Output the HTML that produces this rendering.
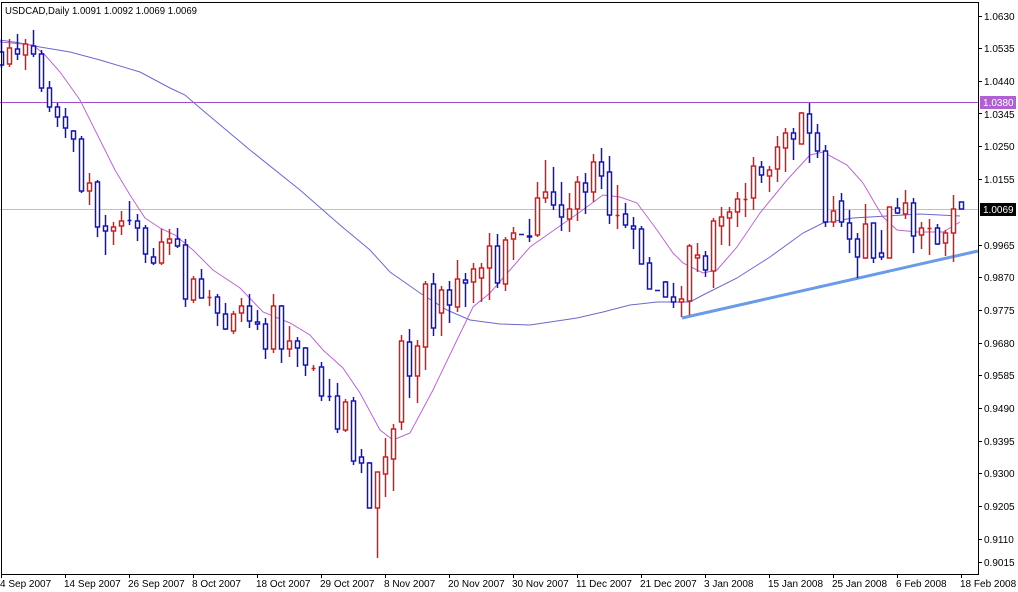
<!DOCTYPE html>
<html><head><meta charset="utf-8"><style>
html,body{margin:0;padding:0;background:#fff;}
svg{display:block;font-family:"Liberation Sans",sans-serif;font-size:10px;}
.b{stroke:#1414b4;fill:#fff;stroke-width:1.5}
.r{stroke:#cc2020;fill:#fff;stroke-width:1.5}
</style></head><body>
<svg width="1018" height="592" viewBox="0 0 1018 592" xmlns="http://www.w3.org/2000/svg">
<rect width="1018" height="592" fill="#fff"/>
<g shape-rendering="crispEdges">
<line x1="0" y1="102.5" x2="978" y2="102.5" stroke="#a050d0"/>
<line x1="0" y1="209.5" x2="978" y2="209.5" stroke="#c0c0c0"/>
</g>
<g fill="none">
<polyline stroke="#6a6ac8" stroke-width="1" points="0,40 20,43 40,47 70,52 100,60 140,72 170,88 185,95 200,108 250,150 300,190 340,225 370,250 390,272 420,293 447,310 470,320 500,324 530,325 577,318 603,312 630,305 657,302 670,302 690,302 703,295 737,278 770,257 803,233 823,223 853,218 887,216 920,214 960,216"/>
<polyline stroke="#b868cc" stroke-width="1" points="0,42 33,45 45,55 60,72 80,100 100,140 115,170 130,195 145,218 160,228 175,235 193,250 213,270 240,288 263,312 290,323 310,335 323,350 343,368 360,393 380,430 393,440 410,433 433,390 457,340 473,307 490,293 510,270 530,247 557,228 580,212 603,195 620,197 637,203 657,230 673,253 683,263 703,273 717,270 737,247 760,213 787,180 810,155 823,152 847,165 863,183 883,217 897,230 917,232 943,232 960,222"/>
<line x1="682" y1="318" x2="978" y2="251" stroke="#6a9ae8" stroke-width="3"/>
</g>
<g>
<path class="b" d="M1.5 40V52M1.5 65V68M-1.5 52H3.5V65H-1.5Z"/>
<path class="r" d="M9.5 39V48M9.5 64V67M7.5 48H11.5V64H7.5Z"/>
<path class="b" d="M17.5 34V49M17.5 54V60M15.5 49H19.5V54H15.5Z"/>
<path class="r" d="M25.5 39V44M25.5 55V70M23.5 44H27.5V55H23.5Z"/>
<path class="b" d="M33.5 30V46M33.5 54V57M31.5 46H35.5V54H31.5Z"/>
<path class="b" d="M41.5 50V54M41.5 88V92M39.5 54H43.5V88H39.5Z"/>
<path class="b" d="M49.5 81V88M49.5 107V112M47.5 88H51.5V107H47.5Z"/>
<path class="b" d="M57.5 103V107M57.5 117V127M55.5 107H59.5V117H55.5Z"/>
<path class="b" d="M65.5 108V117M65.5 128V138M63.5 117H67.5V128H63.5Z"/>
<path class="b" d="M73.5 130V131M73.5 139V152M71.5 131H75.5V139H71.5Z"/>
<path class="b" d="M81.5 136V139M81.5 191V193M79.5 139H83.5V191H79.5Z"/>
<path class="r" d="M89.5 173V183M89.5 191V205M87.5 183H91.5V191H87.5Z"/>
<path class="b" d="M97.5 180V182M97.5 227V237M95.5 182H99.5V227H95.5Z"/>
<path class="b" d="M105.5 215V226M105.5 231V255M103.5 226H107.5V231H103.5Z"/>
<path class="r" d="M113.5 222V227M113.5 231V245M111.5 227H115.5V231H111.5Z"/>
<path class="r" d="M121.5 211V221M121.5 226V235M119.5 221H123.5V226H119.5Z"/>
<path class="b" d="M129.5 201V225M127.5 220.5H131.5"/>
<path class="b" d="M137.5 214V221M137.5 228V241M135.5 221H139.5V228H135.5Z"/>
<path class="b" d="M145.5 225V228M145.5 254V263M143.5 228H147.5V254H143.5Z"/>
<path class="b" d="M153.5 248V257M153.5 263V265M151.5 257H155.5V263H151.5Z"/>
<path class="r" d="M161.5 229V242M161.5 263V265M159.5 242H163.5V263H159.5Z"/>
<path class="r" d="M169.5 229V239M169.5 243V255M167.5 239H171.5V243H167.5Z"/>
<path class="b" d="M177.5 228V239M177.5 246V248M175.5 239H179.5V246H175.5Z"/>
<path class="b" d="M185.5 239V245M185.5 299V307M183.5 245H187.5V299H183.5Z"/>
<path class="r" d="M193.5 276V279M193.5 300V303M191.5 279H195.5V300H191.5Z"/>
<path class="b" d="M201.5 269V279M199.5 279H203.5V298H199.5Z"/>
<path class="r" d="M209.5 290V306M207.5 297.5H211.5"/>
<path class="b" d="M217.5 294V297M217.5 313V326M215.5 297H219.5V313H215.5Z"/>
<path class="b" d="M225.5 303V314M225.5 329V330M223.5 314H227.5V329H223.5Z"/>
<path class="r" d="M233.5 311V314M233.5 331V334M231.5 314H235.5V331H231.5Z"/>
<path class="r" d="M241.5 298V306M241.5 313V322M239.5 306H243.5V313H239.5Z"/>
<path class="b" d="M249.5 294V306M249.5 321V328M247.5 306H251.5V321H247.5Z"/>
<path class="b" d="M257.5 310V322M257.5 324V330M255.5 322H259.5V324H255.5Z"/>
<path class="b" d="M265.5 318V324M265.5 349V359M263.5 324H267.5V349H263.5Z"/>
<path class="r" d="M273.5 294V306M273.5 349V353M271.5 306H275.5V349H271.5Z"/>
<path class="b" d="M281.5 305V306M281.5 349V363M279.5 306H283.5V349H279.5Z"/>
<path class="r" d="M289.5 326V341M289.5 349V357M287.5 341H291.5V349H287.5Z"/>
<path class="b" d="M297.5 337V341M297.5 348V367M295.5 341H299.5V348H295.5Z"/>
<path class="b" d="M305.5 347V348M305.5 365V376M303.5 348H307.5V365H303.5Z"/>
<path class="r" d="M313.5 365V371M311.5 368.5H315.5" stroke-width="2"/>
<path class="b" d="M321.5 362V367M321.5 396V401M319.5 367H323.5V396H319.5Z"/>
<path class="b" d="M329.5 379V401M327.5 396.5H331.5" stroke-width="2"/>
<path class="b" d="M337.5 383V396M337.5 429V433M335.5 396H339.5V429H335.5Z"/>
<path class="r" d="M345.5 399V402M345.5 430V432M343.5 402H347.5V430H343.5Z"/>
<path class="b" d="M353.5 397V401M353.5 461V465M351.5 401H355.5V461H351.5Z"/>
<path class="b" d="M361.5 449V457M361.5 463V473M359.5 457H363.5V463H359.5Z"/>
<path class="b" d="M369.5 462V463M367.5 463H371.5V508H367.5Z"/>
<path class="r" d="M377.5 508V558M375.5 472H379.5V508H375.5Z"/>
<path class="r" d="M385.5 438V457M385.5 474V497M383.5 457H387.5V474H383.5Z"/>
<path class="r" d="M393.5 424V429M393.5 459V491M391.5 429H395.5V459H391.5Z"/>
<path class="r" d="M401.5 335V341M401.5 422V430M399.5 341H403.5V422H399.5Z"/>
<path class="b" d="M409.5 329V342M409.5 376V398M407.5 342H411.5V376H407.5Z"/>
<path class="r" d="M417.5 340V346M417.5 376V403M415.5 346H419.5V376H415.5Z"/>
<path class="r" d="M425.5 281V284M425.5 347V370M423.5 284H427.5V347H423.5Z"/>
<path class="b" d="M433.5 273V284M433.5 328V336M431.5 284H435.5V328H431.5Z"/>
<path class="r" d="M441.5 286V290M441.5 313V336M439.5 290H443.5V313H439.5Z"/>
<path class="b" d="M449.5 281V290M449.5 305V323M447.5 290H451.5V305H447.5Z"/>
<path class="r" d="M457.5 260V279M457.5 307V312M455.5 279H459.5V307H455.5Z"/>
<path class="b" d="M465.5 273V280M465.5 283V307M463.5 280H467.5V283H463.5Z"/>
<path class="r" d="M473.5 263V269M473.5 282V303M471.5 269H475.5V282H471.5Z"/>
<path class="r" d="M481.5 263V268M481.5 278V302M479.5 268H483.5V278H479.5Z"/>
<path class="r" d="M489.5 233V246M489.5 268V300M487.5 246H491.5V268H487.5Z"/>
<path class="b" d="M497.5 234V246M497.5 283V288M495.5 246H499.5V283H495.5Z"/>
<path class="r" d="M505.5 237V240M505.5 284V291M503.5 240H507.5V284H503.5Z"/>
<path class="r" d="M513.5 227V233M513.5 239V260M511.5 233H515.5V239H511.5Z"/>
<path class="b" d="M519 234.5H524"/>
<path class="b" d="M529.5 219V236M529.5 237V242M527.5 236H531.5V237H527.5Z"/>
<path class="r" d="M537.5 182V198M537.5 235V237M535.5 198H539.5V235H535.5Z"/>
<path class="r" d="M545.5 160V192M545.5 198V203M543.5 192H547.5V198H543.5Z"/>
<path class="b" d="M553.5 167V192M553.5 205V210M551.5 192H555.5V205H551.5Z"/>
<path class="b" d="M561.5 182V205M561.5 217V231M559.5 205H563.5V217H559.5Z"/>
<path class="r" d="M569.5 193V209M569.5 219V232M567.5 209H571.5V219H567.5Z"/>
<path class="r" d="M577.5 176V182M577.5 209V221M575.5 182H579.5V209H575.5Z"/>
<path class="b" d="M585.5 173V183M585.5 192V214M583.5 183H587.5V192H583.5Z"/>
<path class="r" d="M593.5 154V162M593.5 192V202M591.5 162H595.5V192H591.5Z"/>
<path class="b" d="M601.5 148V162M601.5 176V189M599.5 162H603.5V176H599.5Z"/>
<path class="b" d="M609.5 156V172M609.5 215V224M607.5 172H611.5V215H607.5Z"/>
<path class="r" d="M617.5 185V229M615.5 215.5H619.5"/>
<path class="b" d="M625.5 203V214M625.5 225V228M623.5 214H627.5V225H623.5Z"/>
<path class="b" d="M633.5 217V226M633.5 229V249M631.5 226H635.5V229H631.5Z"/>
<path class="b" d="M641.5 226V229M639.5 229H643.5V264H639.5Z"/>
<path class="b" d="M649.5 257V263M647.5 263H651.5V289H647.5Z"/>
<path class="b" d="M655 290.5H660" stroke-width="2"/>
<path class="b" d="M665.5 281V282M663.5 282H667.5V297H663.5Z"/>
<path class="b" d="M673.5 283V297M673.5 302V308M671.5 297H675.5V302H671.5Z"/>
<path class="r" d="M681.5 286V299M681.5 302V317M679.5 299H683.5V302H679.5Z"/>
<path class="r" d="M689.5 244V246M689.5 301V315M687.5 246H691.5V301H687.5Z"/>
<path class="r" d="M697.5 243V255M697.5 258V272M695.5 255H699.5V258H695.5Z"/>
<path class="b" d="M705.5 251V256M705.5 270V277M703.5 256H707.5V270H703.5Z"/>
<path class="r" d="M713.5 218V221M713.5 271V288M711.5 221H715.5V271H711.5Z"/>
<path class="r" d="M721.5 207V217M721.5 226V245M719.5 217H723.5V226H719.5Z"/>
<path class="r" d="M729.5 207V212M729.5 218V246M727.5 212H731.5V218H727.5Z"/>
<path class="r" d="M737.5 192V199M737.5 212V227M735.5 199H739.5V212H735.5Z"/>
<path class="r" d="M745.5 183V217M743.5 199.5H747.5"/>
<path class="r" d="M753.5 157V166M753.5 198V210M751.5 166H755.5V198H751.5Z"/>
<path class="b" d="M761.5 161V167M761.5 175V183M759.5 167H763.5V175H759.5Z"/>
<path class="r" d="M769.5 166V170M769.5 176V192M767.5 170H771.5V176H767.5Z"/>
<path class="r" d="M777.5 136V147M777.5 169V182M775.5 147H779.5V169H775.5Z"/>
<path class="r" d="M785.5 128V133M785.5 148V172M783.5 133H787.5V148H783.5Z"/>
<path class="b" d="M793.5 128V133M793.5 139V160M791.5 133H795.5V139H791.5Z"/>
<path class="r" d="M801.5 112V113M799.5 113H803.5V144H799.5Z"/>
<path class="b" d="M809.5 103V114M809.5 133V163M807.5 114H811.5V133H807.5Z"/>
<path class="b" d="M817.5 124V133M817.5 151V158M815.5 133H819.5V151H815.5Z"/>
<path class="b" d="M825.5 145V151M825.5 222V227M823.5 151H827.5V222H823.5Z"/>
<path class="r" d="M833.5 196V211M833.5 222V227M831.5 211H835.5V222H831.5Z"/>
<path class="b" d="M841.5 193V201M841.5 222V227M839.5 201H843.5V222H839.5Z"/>
<path class="b" d="M849.5 210V223M849.5 239V253M847.5 223H851.5V239H847.5Z"/>
<path class="b" d="M857.5 233V239M857.5 257V278M855.5 239H859.5V257H855.5Z"/>
<path class="r" d="M865.5 204V224M865.5 258V259M863.5 224H867.5V258H863.5Z"/>
<path class="b" d="M873.5 258V263M871.5 223H875.5V258H871.5Z"/>
<path class="b" d="M881.5 230V253M881.5 257V260M879.5 253H883.5V257H879.5Z"/>
<path class="r" d="M887.5 207H891.5V258H887.5Z"/>
<path class="b" d="M897.5 198V208M897.5 213V214M895.5 208H899.5V213H895.5Z"/>
<path class="r" d="M905.5 190V203M905.5 214V219M903.5 203H907.5V214H903.5Z"/>
<path class="b" d="M913.5 198V203M913.5 236V253M911.5 203H915.5V236H911.5Z"/>
<path class="r" d="M921.5 222V228M921.5 235V249M919.5 228H923.5V235H919.5Z"/>
<path class="r" d="M929.5 219V255M927.5 228.5H931.5"/>
<path class="b" d="M937.5 224V228M937.5 244V245M935.5 228H939.5V244H935.5Z"/>
<path class="r" d="M945.5 230V233M945.5 243V256M943.5 233H947.5V243H943.5Z"/>
<path class="r" d="M953.5 195V209M953.5 233V262M951.5 209H955.5V233H951.5Z"/>
<path class="b" d="M959.5 202H963.5V209H959.5Z"/>
</g>
<g shape-rendering="crispEdges">
<path d="M1.5 2.5H978.5V574.5H1.5Z" fill="none" stroke="#000"/>
<g stroke="#000">
<path d="M978 16.5h4M978 48.5h4M978 81.5h4M978 113.5h4M978 146.5h4M978 179.5h4M978 245.5h4M978 277.5h4M978 310.5h4M978 343.5h4M978 375.5h4M978 408.5h4M978 441.5h4M978 473.5h4M978 506.5h4M978 539.5h4M978 562.5h4"/>
<path d="M1.5 574v4M65.5 574v4M129.5 574v4M193.5 574v4M257.5 574v4M321.5 574v4M385.5 574v4M449.5 574v4M513.5 574v4M577.5 574v4M641.5 574v4M705.5 574v4M769.5 574v4M833.5 574v4M897.5 574v4M961.5 574v4"/>
</g>
<rect x="980" y="96" width="36" height="13" fill="#b060d0"/>
<rect x="980" y="203" width="36" height="13" fill="#000"/>
</g>
<g fill="#000">
<text x="984" y="20">1.0630</text>
<text x="984" y="52">1.0535</text>
<text x="984" y="85">1.0440</text>
<text x="984" y="118">1.0345</text>
<text x="984" y="150">1.0250</text>
<text x="984" y="183">1.0155</text>
<text x="984" y="249">0.9965</text>
<text x="984" y="281">0.9870</text>
<text x="984" y="314">0.9775</text>
<text x="984" y="347">0.9680</text>
<text x="984" y="379">0.9585</text>
<text x="984" y="412">0.9490</text>
<text x="984" y="445">0.9395</text>
<text x="984" y="477">0.9300</text>
<text x="984" y="510">0.9205</text>
<text x="984" y="543">0.9110</text>
<text x="984" y="566">0.9015</text>
</g>
<text x="983" y="106" fill="#fff">1.0380</text>
<text x="983" y="213" fill="#fff">1.0069</text>
<g fill="#000">
<text x="0" y="587">4 Sep 2007</text>
<text x="64" y="587">14 Sep 2007</text>
<text x="128" y="587">26 Sep 2007</text>
<text x="192" y="587">8 Oct 2007</text>
<text x="256" y="587">18 Oct 2007</text>
<text x="320" y="587">29 Oct 2007</text>
<text x="384" y="587">8 Nov 2007</text>
<text x="448" y="587">20 Nov 2007</text>
<text x="512" y="587">30 Nov 2007</text>
<text x="576" y="587">11 Dec 2007</text>
<text x="640" y="587">21 Dec 2007</text>
<text x="704" y="587">3 Jan 2008</text>
<text x="768" y="587">15 Jan 2008</text>
<text x="832" y="587">25 Jan 2008</text>
<text x="896" y="587">6 Feb 2008</text>
<text x="960" y="587">18 Feb 2008</text>
<text x="5" y="14" font-size="10.5" textLength="192" lengthAdjust="spacingAndGlyphs">USDCAD,Daily  1.0091 1.0092 1.0069 1.0069</text>
</g>
</svg>
</body></html>
